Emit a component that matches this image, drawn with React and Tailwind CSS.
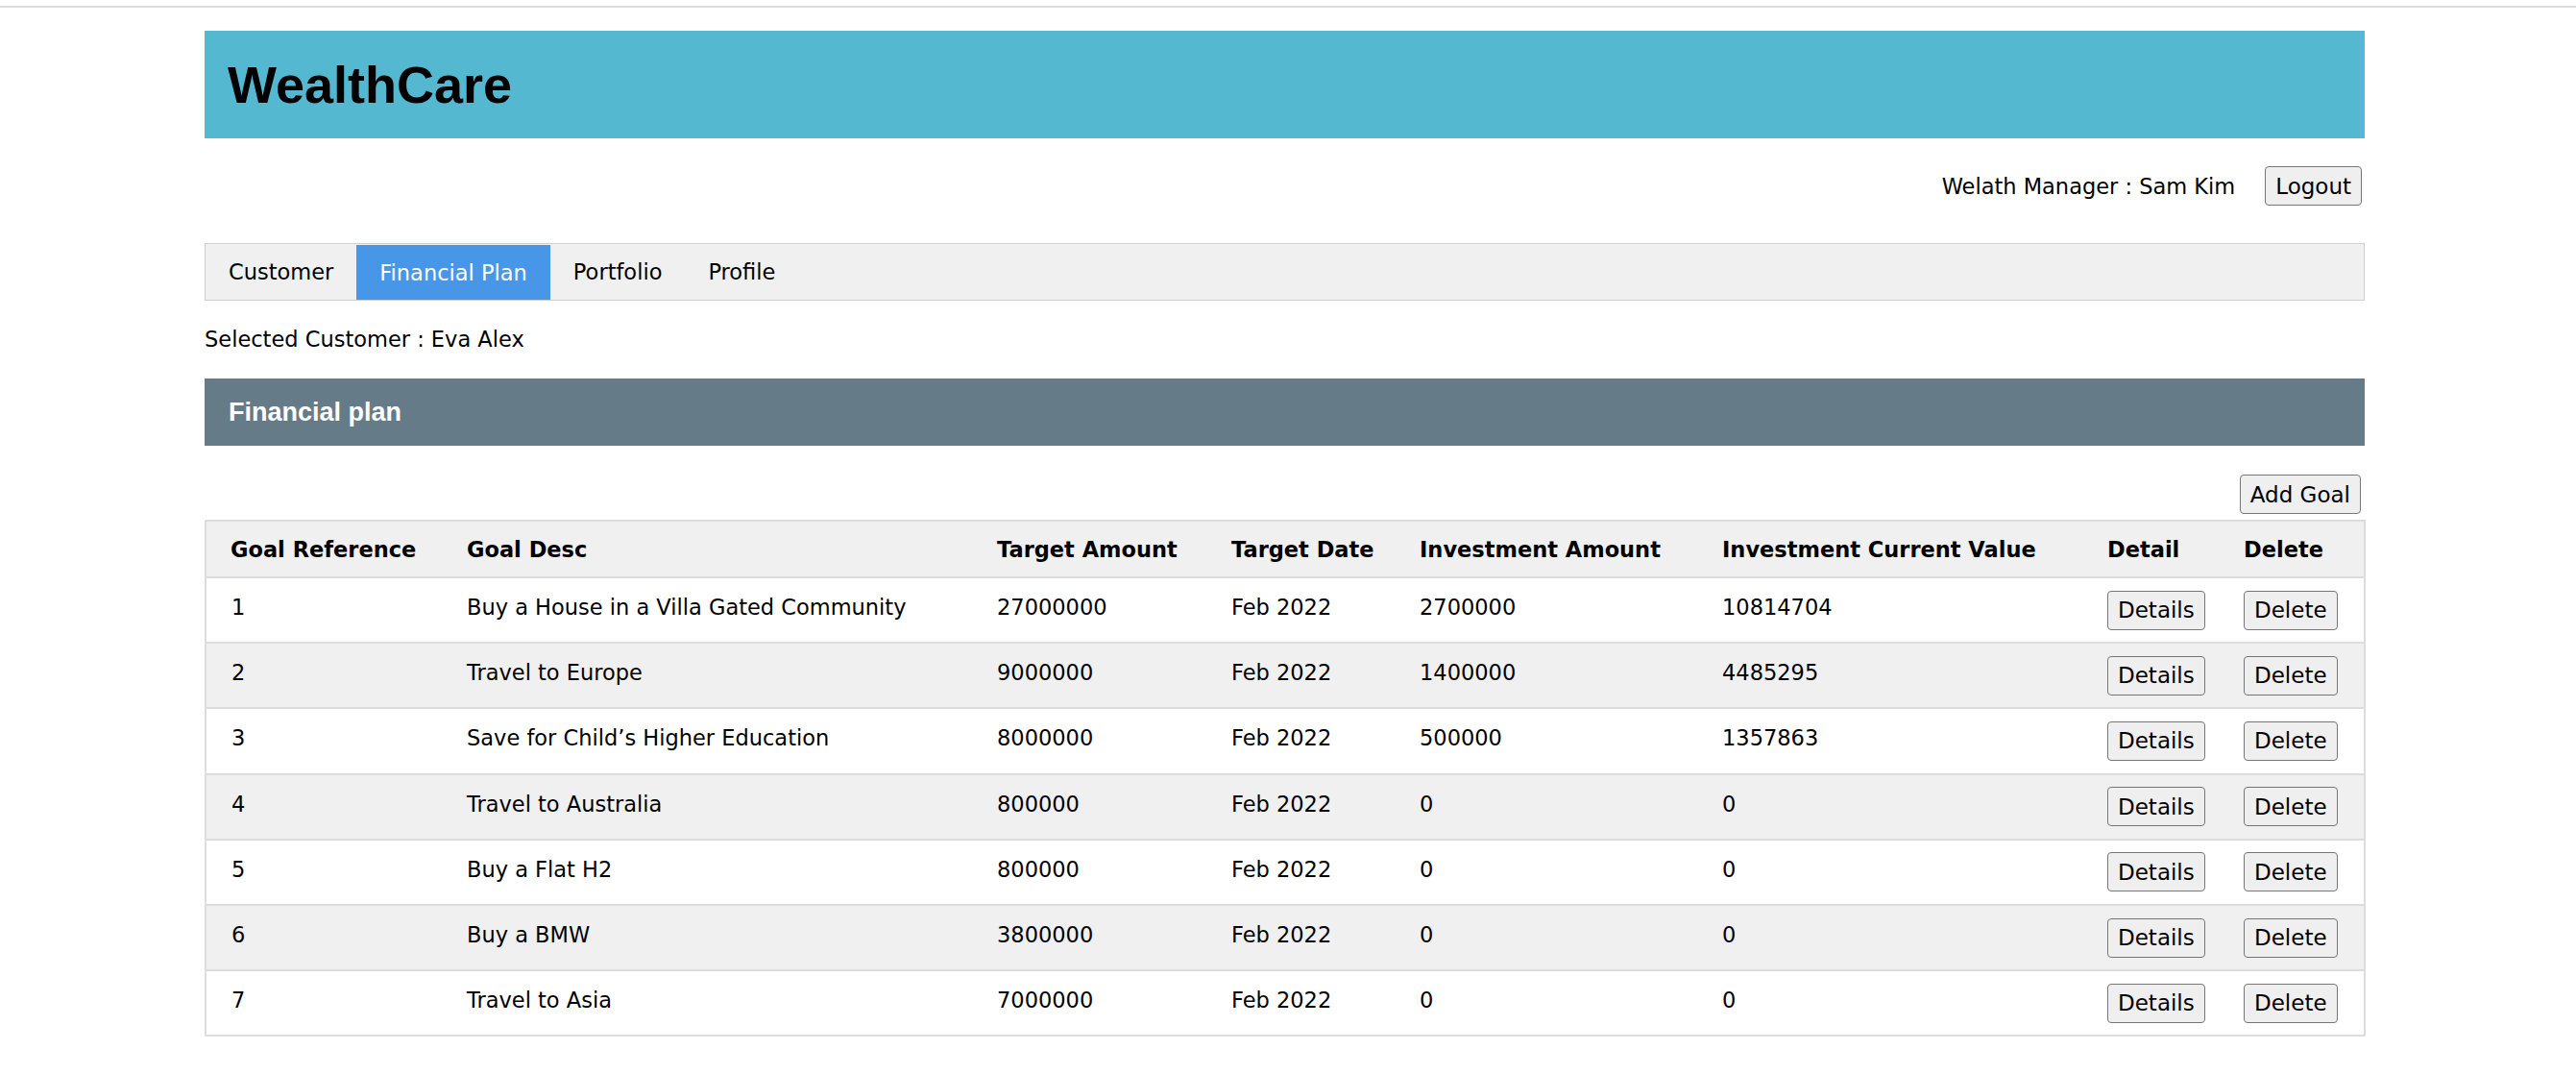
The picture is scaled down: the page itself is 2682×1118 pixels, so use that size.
import React from "react";

const goals = [
  { id: 1, desc: "Buy a House in a Villa Gated Community", target: "27000000", date: "Feb 2022", invested: "2700000", current: "10814704" },
  { id: 2, desc: "Travel to Europe", target: "9000000", date: "Feb 2022", invested: "1400000", current: "4485295" },
  { id: 3, desc: "Save for Child’s Higher Education", target: "8000000", date: "Feb 2022", invested: "500000", current: "1357863" },
  { id: 4, desc: "Travel to Australia", target: "800000", date: "Feb 2022", invested: "0", current: "0" },
  { id: 5, desc: "Buy a Flat H2", target: "800000", date: "Feb 2022", invested: "0", current: "0" },
  { id: 6, desc: "Buy a BMW", target: "3800000", date: "Feb 2022", invested: "0", current: "0" },
  { id: 7, desc: "Travel to Asia", target: "7000000", date: "Feb 2022", invested: "0", current: "0" },
];

const tabs = ["Customer", "Financial Plan", "Portfolio", "Profile"];

function Button({ children }) {
  return (
    <button className="h-[41px] px-[10px] rounded-[4px] border border-[#767676] bg-[#efefef] text-[23px] leading-[26px] text-black">
      {children}
    </button>
  );
}

export default function App() {
  return (
    <div className="min-h-[1118px] bg-white pt-[6px] font-['DejaVu_Sans',Verdana,sans-serif] text-[22.5px] leading-[26px] text-black">
      <div className="h-[2px] bg-[#dcdcdc]" />

      <div className="ml-[213px] w-[2249px] pt-[24px]">
        {/* banner */}
        <div className="h-[112px] bg-[#54b8d1] flex items-center px-[24px]">
          <h1 className="font-['Liberation_Sans',Arial,sans-serif] font-bold text-[54px] leading-none">
            WealthCare
          </h1>
        </div>

        {/* manager */}
        <div className="mt-[29px] flex items-center justify-end gap-[31px] pr-[3px]">
          <span>Welath Manager : Sam Kim</span>
          <Button>Logout</Button>
        </div>

        {/* tabs */}
        <div className="mt-[39px] h-[60px] flex border border-[#cfcfcf] bg-[#f0f0f0]">
          {tabs.map((t) => (
            <div
              key={t}
              className={
                t === "Financial Plan"
                  ? "flex items-center px-[24px] mt-px bg-[#4796e8] text-white"
                  : "flex items-center px-[24px]"
              }
            >
              {t}
            </div>
          ))}
        </div>

        <p className="mt-[27px]">Selected Customer : Eva Alex</p>

        {/* section bar */}
        <div className="mt-[28px] h-[70px] bg-[#667b88] flex items-center px-[25px]">
          <h3 className="font-['Liberation_Sans',Arial,sans-serif] font-bold text-[27px] text-white leading-none">
            Financial plan
          </h3>
        </div>

        <div className="mt-[30px] flex justify-end pr-[4px]">
          <Button>Add Goal</Button>
        </div>

        <table className="mt-[6px] w-full table-fixed border-collapse border-2 border-[#dddddd]">
          <colgroup>
            <col className="w-[247px]" />
            <col className="w-[552px]" />
            <col className="w-[244px]" />
            <col className="w-[196px]" />
            <col className="w-[315px]" />
            <col className="w-[401px]" />
            <col className="w-[142px]" />
            <col className="w-[151px]" />
          </colgroup>
          <thead>
            <tr className="h-[59px] bg-[#f0f0f0] border-b-2 border-[#dddddd]">
              {["Goal Reference", "Goal Desc", "Target Amount", "Target Date", "Investment Amount", "Investment Current Value", "Detail", "Delete"].map((h) => (
                <th key={h} className="text-left font-bold pl-[25px] whitespace-nowrap">
                  {h}
                </th>
              ))}
            </tr>
          </thead>
          <tbody>
            {goals.map((g, i) => (
              <tr
                key={g.id}
                className={
                  "h-[68.2px] border-b-2 border-[#dddddd] " +
                  (i % 2 === 1 ? "bg-[#f0f0f0]" : "bg-white")
                }
              >
                <td className="pl-[26px] pb-[6px]">{g.id}</td>
                <td className="pl-[25px] pb-[6px]">{g.desc}</td>
                <td className="pl-[25px] pb-[6px]">{g.target}</td>
                <td className="pl-[25px] pb-[6px]">{g.date}</td>
                <td className="pl-[25px] pb-[6px]">{g.invested}</td>
                <td className="pl-[25px] pb-[6px]">{g.current}</td>
                <td className="pl-[25px]">
                  <Button>Details</Button>
                </td>
                <td className="pl-[25px]">
                  <Button>Delete</Button>
                </td>
              </tr>
            ))}
          </tbody>
        </table>
      </div>
    </div>
  );
}
